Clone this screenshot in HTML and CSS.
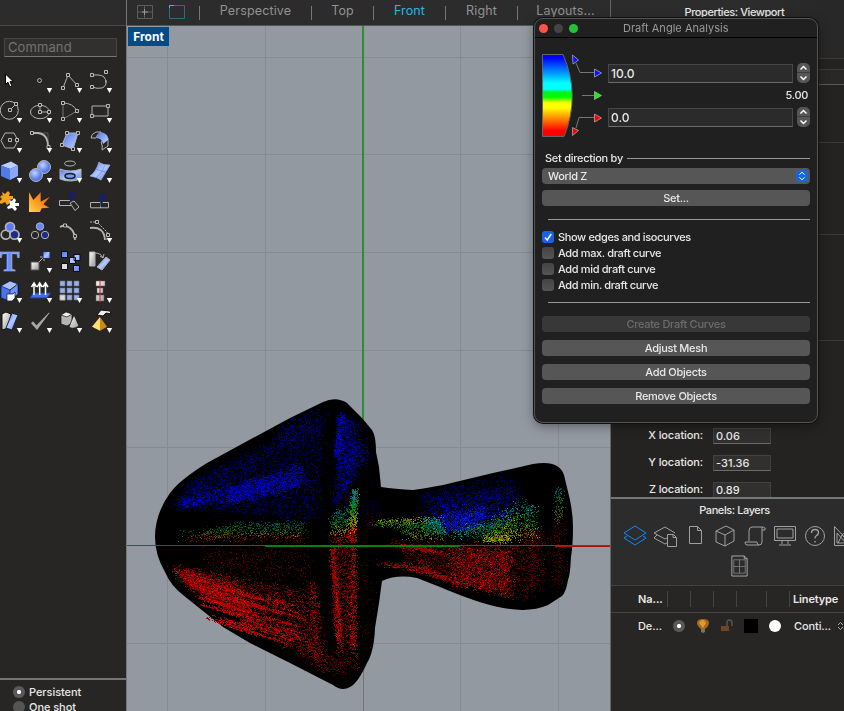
FILE: index.html
```html
<!DOCTYPE html>
<html lang="en">
<head>
<meta charset="utf-8">
<title>Draft Angle Analysis</title>
<link rel="stylesheet" href="styles.css">
</head>
<body>
<svg width="0" height="0" class="defs">
  <defs>
    <linearGradient id="blue" x1="0" y1="0" x2="1" y2="1"><stop offset="0" stop-color="#4a74ea"/><stop offset=".5" stop-color="#b4c8ff"/><stop offset="1" stop-color="#5a7ff0"/></linearGradient>
    <linearGradient id="sheet" x1="0" y1="0" x2="1" y2="1"><stop offset="0" stop-color="#4b74ee"/><stop offset="1" stop-color="#c4d4ff"/></linearGradient>
    <linearGradient id="grey" x1="0" y1="0" x2="1" y2="1"><stop offset="0" stop-color="#fff"/><stop offset="1" stop-color="#999"/></linearGradient>
    <radialGradient id="ball" cx=".4" cy=".35"><stop offset="0" stop-color="#c3d3ff"/><stop offset="1" stop-color="#587be8"/></radialGradient>
    <linearGradient id="fire" x1="0" y1="1" x2="1" y2="0"><stop offset="0" stop-color="#ffd84a"/><stop offset=".55" stop-color="#ff8a1c"/><stop offset="1" stop-color="#f04a10"/></linearGradient>
    <linearGradient id="angle" x1="0" y1="0" x2="0" y2="1"><stop offset=".04" stop-color="#00f"/><stop offset=".35" stop-color="#0ff"/><stop offset=".42" stop-color="#0ff"/><stop offset=".46" stop-color="#00f020"/><stop offset=".52" stop-color="#0f0"/><stop offset=".59" stop-color="#ff0"/><stop offset=".65" stop-color="#ff0"/><stop offset=".93" stop-color="#f00"/></linearGradient>
    <path id="more" d="M21.8 22h5.4l-2.7 5z" fill="#fff"/>
    <path id="node" d="M-1.5-1.5h3v3h-3z" fill="#272625" stroke="#bbb"/>
  </defs>
</svg>
<div class="app">
  <aside class="tools">
    <div class="tools-top"></div>
    <div class="command">Command</div>
    <div class="palette">
      <svg viewBox="0 0 30 30"><path d="M10.5 8v10.5l2.500-2.200 2 4.600 2-1-2-4.200h3.400z" fill="#fff" stroke="#000"/></svg>
      <svg viewBox="0 0 30 30"><circle cx="14.5" cy="14.5" r="2"/><use href="#more"/></svg>
      <svg viewBox="0 0 30 30"><path d="M8 22 13 9l9 10"/><use href="#node" x="8" y="22"/><use href="#node" x="13" y="9"/><use href="#node" x="22" y="19"/><use href="#more"/></svg>
      <svg viewBox="0 0 30 30"><path d="M7 9h6q8 0 8 8M7 21q5 2 10 1 5-2 4-8"/><use href="#node" x="7" y="9"/><use href="#node" x="21" y="6"/><use href="#node" x="7" y="21"/><use href="#more"/></svg>

      <svg viewBox="0 0 30 30"><circle cx="14.3" cy="14.3" r="9"/><path d="m15 14 6-6"/><use href="#node" x="15" y="14"/><use href="#node" x="21" y="8"/><use href="#more"/></svg>
      <svg viewBox="0 0 30 30"><ellipse cx="15" cy="16" rx="9.5" ry="6.7"/><path d="M15 9v7h9"/><use href="#node" x="15" y="9"/><use href="#node" x="15" y="16"/><use href="#node" x="24" y="16"/><use href="#more"/></svg>
      <svg viewBox="0 0 30 30"><path d="M8 7q10 0 14 8"/><path d="M8 7v16l14-8" opacity=".6"/><use href="#node" x="8" y="7"/><use href="#node" x="22" y="15"/><use href="#node" x="8" y="23"/><use href="#more"/></svg>
      <svg viewBox="0 0 30 30"><path d="M7 10h16v10H7z"/><use href="#node" x="23" y="10"/><use href="#node" x="7" y="20"/><use href="#more"/></svg>

      <svg viewBox="0 0 30 30"><path d="m6 14.500 4-7.500h9l4 7.500-4 7.500h-9z"/><use href="#node" x="15" y="14"/><use href="#node" x="22" y="14"/><use href="#more"/></svg>
      <svg viewBox="0 0 30 30"><path d="M7 7h16v14" opacity=".35"/><path d="M7 7h6q10 1 10 14" stroke-width="1.8"/><use href="#node" x="7" y="7"/><use href="#node" x="23.5" y="21"/><use href="#more"/></svg>
      <svg viewBox="0 0 30 30"><path d="M12 7h11l-5 16-11-4z" fill="url(#sheet)"/><use href="#node" x="12" y="7"/><use href="#node" x="23" y="7"/><use href="#node" x="18" y="23"/><use href="#node" x="7" y="19"/><use href="#more"/></svg>
      <svg viewBox="0 0 30 30"><path d="M6 12q0-4 5-6l5 0q-4 2-5 6zM16 16l7-4v8l-6 4q1-4-1-8z"/><path d="m11 12 5-6q8 2 7 8l-5 4q-1-6-7-6z" fill="url(#sheet)" stroke="none"/><use href="#more"/></svg>

      <svg viewBox="0 0 30 30"><g stroke="none"><path d="m6 9.500 10-4 7 4-8 3.500z" fill="#bccdff"/><path d="m6 9.500 9 3.500v11L6 20z" fill="#527ae9"/><path d="m15 13 8-3.500V20l-8 4z" fill="#89a6fa"/></g><use href="#more"/></svg>
      <svg viewBox="0 0 30 30"><circle cx="19" cy="11" r="6.500" fill="url(#ball)"/><circle cx="11" cy="19" r="6.500" fill="url(#ball)"/><use href="#more"/></svg>
      <svg viewBox="0 0 30 30"><ellipse cx="15" cy="7.500" rx="5.500" ry="2.500"/><path d="M5 13q10 4 21 0v10q-11 4-21 0z" fill="url(#blue)"/><ellipse cx="15" cy="20" rx="5" ry="2.500" fill="#7996e8" stroke="#171b2a" stroke-width="1.500"/><use href="#more"/></svg>
      <svg viewBox="0 0 30 30"><path d="M14 6q3 3 11 3-3 5-9 15-4-3-11-4 6-4 9-14z" fill="url(#blue)" stroke="#9fb2f1" stroke-width=".7"/><path d="M11 13q4 2 10 3M20 9q-3 8-9 13" stroke="#6f88d8" stroke-width=".7"/><use href="#more"/></svg>

      <svg viewBox="0 0 30 30"><path d="m7 6 3 2 3-3 2 2-1 3 4 0v3l-4 1 1 3-3 2-2-3-4 2-2-2 3-3-2-2 2-2 1 1z" fill="#f6a21d" stroke="none"/><path d="m14 14 3 1 2-3 2 2-1 3 4 0v3l-4 0 2 3-2 2-3-3-4 1-1-2 3-2z" fill="#fff" stroke="none"/></svg>
      <svg viewBox="0 0 30 30"><path d="M4 26V6l4.300 8 7.400-7.700v9.400l9.300-5-6.700 7.600 6 3.400-7.600.6L15 26z" fill="url(#fire)" stroke="none"/></svg>
      <svg viewBox="0 0 30 30"><path d="M15 14.500H4.500v5H16M15 17l4-2 5 6-4 3.500z"/><path d="M14.300 6.300H21L15 17z" fill="#14206e" stroke="none"/></svg>
      <svg viewBox="0 0 30 30"><path d="M5.500 16.500h18v5.300h-18zM15.500 16v6"/><path d="M15.300 8.300h6.400l-6.400 13z" fill="#14206e" stroke="none"/></svg>

      <svg viewBox="0 0 30 30"><g stroke-width="1.700"><circle cx="10.700" cy="18.700" r="4.500"/><circle cx="19.500" cy="18.700" r="4.500" fill="#1b2c87"/><circle cx="15" cy="11" r="4.500" fill="#5a78ff"/></g><use href="#more"/></svg>
      <svg viewBox="0 0 30 30"><circle cx="15" cy="10.500" r="3.700" fill="#6685ff"/><circle cx="10" cy="19" r="3.700"/><circle cx="20" cy="19" r="3.700" fill="#1b2c87"/></svg>
      <svg viewBox="0 0 30 30"><path d="M5 11q5-3 10 1 5 4 5 12" stroke-width="1.800"/><use href="#node" x="10" y="9.500"/><use href="#node" x="20" y="20"/></svg>
      <svg viewBox="0 0 30 30"><path d="M5 12q14-2 15 12" stroke-width="1.800"/><path d="M5 6h7l10 10v8" stroke-dasharray="2 1"/><use href="#node" x="12" y="6"/><use href="#node" x="23" y="19"/><use href="#more"/></svg>

      <svg viewBox="0 0 30 30"><text x="14.500" y="25" text-anchor="middle" class="tee">T</text></svg>
      <svg viewBox="0 0 30 30"><path d="m13 17 6-6m-4 0h4v4"/><path d="M6 16h8v8H6z" fill="url(#grey)" stroke="#555"/><path d="M18 5.500h7v7h-7z" fill="url(#blue)" stroke="#222c55"/><use href="#more"/></svg>
      <svg viewBox="0 0 30 30"><g fill="url(#blue)" stroke="#080c1c"><path d="M6.500 5.500h6v6h-6zM19 8.500h6v6h-6zM14.500 11.500h6v6h-6zM18.500 19.500h6v6h-6z"/><path d="M6.500 17.500h6v6h-6z" fill="#ddd"/></g></svg>
      <svg viewBox="0 0 30 30"><path d="M4.500 6h5.500v14H4.500z" fill="url(#grey)"/><path d="m12 21 9-10 4 3-8 10z" fill="url(#blue)"/><path d="M10 7q6 0 8 5m1-4-1 4-3-2"/></svg>

      <svg viewBox="0 0 30 30"><g stroke="#0c1840" stroke-width=".7"><path d="m6 10 9-5 8 3v10l-8 7-9-3z" fill="#4773e5"/><path d="m6 10 9-5 8 3-8 6z" fill="#aac0ff"/><path d="m15 14 8-6v10l-8 7z" fill="#6f93f4"/><path d="M12 18h6l2-2v6l-3 3h-5z" fill="#fff"/></g><use href="#more"/></svg>
      <svg viewBox="0 0 30 30"><path d="m8 17-3 5h17l4-5z" fill="#426de5" stroke="#213b91"/><path d="M9 19V8m-2.500 3L9 7l2.500 4M14.700 19V8m-2.500 3 2.500-4 2.500 4M20.500 19V8M18 11l2.500-4 2.500 4" stroke="#fff" stroke-width="1.500"/><use href="#more"/></svg>
      <svg viewBox="0 0 30 30"><path d="M5 5h5v5H5zM12 5h5v5h-5zM19 5h5v5h-5zM5 12h5v5H5zM12 12h5v5h-5zM19 12h5v5h-5zM12 19h5v5h-5zM19 19h5v5h-5z" fill="#9aaee8" stroke="#666e88" stroke-width=".6"/><path d="M5 19h5v5H5z" fill="#ddd"/><use href="#more"/></svg>
      <svg viewBox="0 0 30 30"><path d="M11 5h9v5h-9zM12 12h6v5h-6zM11 19h8v6h-8z" fill="url(#grey)" stroke="#666" stroke-width=".5"/><path d="M15 4v22" stroke="#e02020"/><use href="#more"/></svg>

      <svg viewBox="0 0 30 30"><path d="m7 8 4-2 5 2-3 14-6 2z" fill="url(#grey)" stroke="#111"/><path d="m17 7 6 2-6 15-6-2z" fill="url(#blue)" stroke="#172446"/><use href="#more"/></svg>
      <svg viewBox="0 0 30 30"><path d="m6 17.300 2-2 3.500 4L24 6.500l.5.500L12 24z" fill="#a7a6a4" stroke="none"/><use href="#more"/></svg>
      <svg viewBox="0 0 30 30"><g stroke="#111" stroke-width=".7"><path d="m6 9 5-3 6 2v9l-5 3-6-2z" fill="#b5b5b5"/><path d="m6 9 5-3 6 2-5 3z" fill="#eee"/><path d="m19 9-5 12q4 3 10-1z" fill="url(#grey)"/></g><use href="#more"/></svg>
      <svg viewBox="0 0 30 30"><path d="m15 11-8 9.700 8 4z" fill="#ffe072" stroke="none"/><path d="m15 11 7 9.700-7 4z" fill="#c98a18" stroke="none"/><path d="m12 9 4-5 9 1 1 3-5-1-3 3z" fill="#eee" stroke="#111"/><use href="#more"/></svg>
    </div>
    <div class="modes">
      <div class="mode"><i class="radio on"></i>Persistent</div>
      <div class="mode"><i class="radio"></i>One shot</div>
    </div>
  </aside>

  <main class="view">
    <nav class="tabs">
      <svg class="lay" viewBox="0 0 16 14"><path d="M.5.500h15v13H.5zM7.500.500v13M.5 7h15"/><path d="M7.500 4v6M5 7h6" stroke="#999"/></svg>
      <svg class="single" viewBox="0 0 16 14"><path d="M.5.500h15v13H.5z" stroke="#2d6b82"/><path d="M.5 3V.500H5" stroke="#35bfee"/></svg>
      <i></i><span class="t1">Perspective</span><i></i><span class="t2">Top</span><i></i><span class="t3 active">Front</span><i></i><span class="t4">Right</span><i></i><span class="t5">Layouts...</span>
    </nav>
    <div class="viewport">
      <svg class="scene" viewBox="127 26 484 685">
        <path d="M167.500 26v685M265.500 26v685M460.500 26v685M558.500 26v685M127 57.500h484M127 154.500h484M127 252.500h484M127 350.500h484M127 447.500h484M127 643.500h484" stroke="#858b93"/>
        <path d="M363.500 545v166" stroke="#6f747a"/>
        <path d="M363 26v519" stroke="#2e8d35" stroke-width="2"/>
        <path d="M155 537Q155 514 170 493C180 480 196 470 207 463L240 445 290 418 323 402Q336 396 347 403L362 418 372 430Q376 436 376 452L379 467 381 487Q395 489 413 490 422 489 443 485L493 473 533 464Q549 461 557 466 562 469 564 475L570 500Q573 515 573 527 573 545 571 557 570 576 568 580 566 592 562 596L548 605Q530 613 503 608 480 604 440 587L417 578Q397 574 382 581L379 603 375 628Q374 652 367 663 358 683 350 687 342 692 333 685L290 663 250 643 223 627 183 595Q171 586 165 572 155 555 155 537Z" fill="#000"/>
      </svg>
      <canvas id="mesh" width="484" height="685"></canvas>
      <svg class="scene" viewBox="127 26 484 685">
        <path d="M127 545.500h484" stroke="#0b7511"/>
        <path d="M265 546h195" stroke="#078407" stroke-width="2"/>
        <path d="M555 546.500h56" stroke="#a51208"/>
      </svg>
      <div class="view-name">Front</div>
    </div>
  </main>

  <aside class="side">
    <section class="props">
      <h2>Properties: Viewport</h2>
      <div class="r r1"></div><div class="r r2"></div><div class="r r3"></div><div class="r r4"></div><div class="r r5"></div>
      <div class="locs">
        <label>X location:</label><b>0.06</b>
        <label>Y location:</label><b>-31.36</b>
        <label>Z location:</label><b>0.89</b>
      </div>
    </section>
    <section class="layers">
      <h2>Panels: Layers</h2>
      <div class="icons">
        <svg viewBox="0 0 24 22" class="cur"><path d="M1 8 12 1l11 7-11 7zM4 11l-3 2 11 7 11-7-3-2"/></svg>
        <svg viewBox="0 0 24 22"><path d="M14 13 12 14 1 8l11-6 10 6M4 10l-3 3 11 6 2-1M14.500 9.500h6l3 3v9h-9zM20 9.500v3h3"/></svg>
        <svg viewBox="0 0 24 22"><path d="M6.500 1.500h8l4 4V18.500H6.500zM14.500 1.500v4h4"/></svg>
        <svg viewBox="0 0 24 22"><path d="m3 6 10-5 8 4v11l-9 5-9-4zM3 6l9 4 9-5M12 10v11"/></svg>
        <svg viewBox="0 0 24 22"><path d="M22 5V3q-1-1-3-1H9q-3 0-3 4v10M19 2v15q0 3-3 3H4q-2 0-2-3h12q0 3 2 3M19 5h3"/></svg>
        <svg viewBox="0 0 24 22"><path d="M1.500 1.500h21v14h-21zM4 4h16v9H4zM9 16v3m6-3v3M6 20h12"/></svg>
        <svg viewBox="0 0 24 22"><circle cx="12" cy="11" r="9.500"/><path d="M8.500 8q0-3.500 3.500-3.500t3.500 3q0 2-2 3-1.500.8-1.500 3M12 16v1.500" stroke-width="1.400"/></svg>
        <svg viewBox="0 0 24 22"><path d="M1.500 1.500v19h18M1.500 1.500l18 19M4 8v10h9zM20 1 9 10l-4 8M9 10l3 3"/></svg>
      </div>
      <svg class="sheet" viewBox="0 0 18 23"><path d="M1 1h13l3 3v18H1zM14 1v3h3"/><path d="M3 5h12v14H3zM9 5v14M3 12h12" stroke="#777"/></svg>
      <div class="row head"><span class="n">Na...</span><i></i><i></i><i></i><i class="w"></i><i></i><i class="end"></i><span class="lt">Linetype</span></div>
      <div class="row item"><span class="n">De...</span><i class="radio on"></i>
        <svg width="14" height="16" viewBox="0 0 14 16"><path d="M1 5q0-4 6-4t6 4q0 3-4 6H5Q1 8 1 5z" fill="#a66a1c"/><path d="M3 5q1-3 4-3 2 0 3 3l-3 5z" fill="#d99a3a"/><path d="M5 11h4v3l-2 1-2-1z" fill="#77736b"/></svg>
        <svg width="13" height="14" viewBox="0 0 13 14"><path d="M1 7h8v5H1z" fill="#75451f"/><path d="M7 7V4q0-3 2.500-3T12 4v3" fill="none" stroke="#57544f" stroke-width="1.500"/></svg>
        <i class="sw"></i><i class="dot"></i><span class="lt2">Conti...</span>
        <svg class="ud" width="7" height="8" viewBox="0 0 7 8"><path d="m1 3 2.500-2.500L6 3M1 5l2.500 2.500L6 5" fill="none" stroke="#aaa"/></svg>
      </div>
    </section>
  </aside>
</div>

<div class="dialog">
  <header><i class="red"></i><i></i><i class="green"></i><span>Draft Angle Analysis</span></header>
  <div class="body">
    <div class="range">
      <svg width="62" height="84" viewBox="0 0 62 84">
        <path d="M.5.500H21Q39 41 22 82.500H.5z" fill="url(#angle)" stroke="#666"/>
        <g fill="none" stroke="#777"><path d="m34 9 4 9.500h14M40 41.500h12M34 74l3-10.500h15"/></g>
        <g stroke="#aaa" stroke-width=".8"><path d="m30.500 1 6 5-5.500 4zM52.500 15l7 4-7 4z" fill="#11f"/><path d="m52.500 37.500 7 4-7 4z" fill="#0f0"/><path d="m52.500 60 7 4-7 4zM30.500 73.500l6 3-6 5z" fill="#f00"/></g>
      </svg>
      <div class="fields">
        <div class="field"><b>10.0</b><em><svg viewBox="0 0 13 20"><path d="m3.500 6.500 3-3 3 3M3.500 13.500l3 3 3-3"/></svg></em></div>
        <div class="mid">5.00</div>
        <div class="field"><b>0.0</b><em><svg viewBox="0 0 13 20"><path d="m3.500 6.500 3-3 3 3M3.500 13.500l3 3 3-3"/></svg></em></div>
      </div>
    </div>
    <div class="legend">Set direction by</div>
    <div class="btn select">World Z<em><svg viewBox="0 0 12 12"><path d="m3.500 4.700 2.500-2.500 2.500 2.500M3.500 7.300 6 9.800l2.500-2.500"/></svg></em></div>
    <div class="btn set">Set...</div>
    <hr>
    <div class="check"><i class="on"><svg viewBox="0 0 12 12"><path d="m3 6.500 2.200 2.500L9.200 3"/></svg></i>Show edges and isocurves</div>
    <div class="check"><i></i>Add max. draft curve</div>
    <div class="check"><i></i>Add mid draft curve</div>
    <div class="check"><i></i>Add min. draft curve</div>
    <hr class="second">
    <div class="actions"><div class="btn off">Create Draft Curves</div><div class="btn">Adjust Mesh</div><div class="btn">Add Objects</div><div class="btn">Remove Objects</div></div>
  </div>
</div>
<script src="mesh.js"></script>
</body>
</html>
```
FILE: styles.css
```css
* { box-sizing: border-box; }
body { margin: 0; width: 844px; height: 711px; overflow: hidden; background: #252423; color: #e8e8e8; font: 11px/14px Inter, "Liberation Sans", sans-serif; }
.defs { position: absolute; }
svg { display: block; }
.app { display: flex; height: 711px; }
h2 { margin: 0; font-size: 11px; line-height: 14px; font-weight: 500; text-align: center; letter-spacing: -.42px; }

.tools { width: 127px; border-right: 1px solid #777; background: #272625; display: flex; flex-direction: column; overflow: hidden; flex: none; }
.tools-top { height: 26px; flex: none; background: #2c2c2c; border-bottom: 1px solid #484848; }
.command { width: 113px; height: 19px; margin: 12px 0 9px 4px; padding-left: 3px; flex: none; background: #31302f; border: 1px solid #444; border-bottom-color: #777; color: #737271; font-size: 13px; line-height: 17px; letter-spacing: .1px; }
.palette { display: grid; grid-template-columns: repeat(4, 30px); grid-auto-rows: 30px; margin-left: -5px; }
.palette svg { width: 30px; height: 30px; fill: none; stroke: #b2b2b2; stroke-width: 1; }
.palette use[href="#more"] { stroke: none; }
.tee { font: bold 30px "Liberation Serif", serif; fill: #6d92f5; stroke: #a6bbff; stroke-width: .7px; }
.modes { margin-top: auto; height: 33px; border-top: 2px solid #757575; padding: 4px 0 0 13px; flex: none; }
.mode { display: flex; align-items: center; gap: 4px; height: 15px; font-weight: 500; letter-spacing: -.05px; }
.radio { width: 12px; height: 12px; border-radius: 50%; background: #555; display: block; flex: none; }
.radio.on { background: radial-gradient(circle, #fff 0 1.700px, #595959 2.500px); }

.view { width: 484px; flex: none; display: flex; flex-direction: column; border-right: 1px solid #666; }
.tabs { height: 26px; background: #2c2c2c; border-bottom: 1px solid #555; display: flex; align-items: flex-start; color: #929292; font-size: 12.500px; line-height: 15px; padding-top: 3px; }
.tabs svg { width: 16px; height: 14px; fill: none; stroke: #5c5c5c; margin: 2px 0 0 10px; flex: none; }
.tabs svg.single { margin-left: 16px; margin-right: 14px; }
.tabs i { width: 1px; height: 14px; background: #777; margin-top: 3px; flex: none; }
.tabs span { text-align: center; white-space: nowrap; letter-spacing: .15px; flex: none; }
.t1 { width: 111px; } .t2 { width: 61px; } .t3 { width: 71px; } .t4 { width: 71px; } .t5 { width: 95px; }
.tabs .active { color: #2bb5e6; }
.viewport { position: relative; flex: 1; background: #9299a1; overflow: hidden; }
.scene, #mesh { position: absolute; left: 0; top: 0; width: 484px; height: 685px; fill: none; }
.view-name { position: absolute; left: 1px; top: 1px; width: 41px; height: 19px; background: #024b8b; color: #fff; font-size: 12px; font-weight: 700; line-height: 19px; text-align: center; }

.side { flex: 1; min-width: 0; display: flex; flex-direction: column; overflow: hidden; }
.props { height: 497px; background: #242322; overflow: hidden; flex: none; }
.props h2 { height: 58px; padding: 5px 0 0 14px; background: linear-gradient(90deg, #2c2c2c 60%, #272727); }
.r { border-top: 1px solid #3b3a39; }
.r1 { height: 11px; } .r2 { height: 15px; background: #292827; } .r3 { height: 58px; border-color: #5a5958; } .r4 { height: 92px; } .r5 { height: 107px; border-bottom: 1px solid #3b3a39; }
.locs { display: grid; grid-template-columns: 92px 58px; grid-auto-rows: 27px; column-gap: 10px; padding-top: 87px; font-weight: 500; }
.locs label { text-align: right; line-height: 15px; letter-spacing: -.1px; }
.locs b { height: 16px; line-height: 15px; padding-left: 2px; background: #31302f; border: 1px solid #434241; border-bottom-color: #6b6b6b; font-weight: 500; }
.layers { flex: 1; border-top: 2px solid #777; background: #272625; }
.layers h2 { background: #2c2c2c; height: 26px; padding: 4px 0 0 14px; }
.icons { display: flex; background: #2c2c2c; padding-left: 12px; gap: 6px; height: 28px; overflow: hidden; }
.icons svg { width: 24px; height: 22px; fill: none; stroke: #a0a0a0; flex: none; }
.icons .cur { stroke: #1485ff; }
.sheet { width: 233px; height: 33px; padding: 2px 0 8px 24px; background: #2c2c2c; border-bottom: 1px solid #414141; fill: none; stroke: #aaa; }
.row { display: flex; align-items: center; height: 27px; font-weight: 500; white-space: nowrap; overflow: hidden; }
.row .n { width: 56px; padding-left: 27px; flex: none; letter-spacing: -.1px; }
.head { font-weight: 600; border-bottom: 1px solid #454443; }
.head i { width: 1px; height: 16px; background: #454443; margin-right: 22px; flex: none; }
.head i.w { margin-right: 29px; } .head i.end { margin-right: 3px; }
.head .lt { letter-spacing: -.15px; }
.row.item { height: 26px; }
.item .radio { margin: 0 11px 0 6px; }
.item svg { flex: none; margin-right: 10px; }
.sw { width: 14px; height: 14px; background: #000; margin: 0 11px 0 1px; flex: none; }
.dot { width: 12px; height: 12px; border-radius: 50%; background: #fff; flex: none; }
.lt2 { margin-left: 13px; width: 43px; flex: none; letter-spacing: -.1px; }
.item .ud { margin: 0; }

.dialog { position: absolute; left: 534px; top: 18px; width: 284px; height: 405px; background: #202020; border: 1px solid #555; border-radius: 9px; box-shadow: 0 0 0 1px #111, 0 3px 12px #0006; overflow: hidden; }
.dialog header { height: 19px; border-bottom: 1px solid #000; display: flex; align-items: center; padding-left: 4px; gap: 6px; color: #999; }
.dialog header i { width: 9px; height: 9px; border-radius: 50%; background: #444; }
.dialog header i.red { background: #ff5249; } .dialog header i.green { background: #22c13a; }
.dialog header span { margin-left: 39px; letter-spacing: .02px; }
.body { padding: 16px 7px 0; }
.range { display: flex; height: 84px; }
.fields { flex: 1; padding: 9px 0 0 4px; }
.field { display: flex; height: 20px; align-items: center; gap: 4px; }
.field b { flex: 1; height: 19px; border: 1px solid #464646; border-bottom-color: #6b6b6b; background: #2b2b2b; font-size: 12px; line-height: 18px; font-weight: 500; padding-left: 2px; }
.field em { width: 13px; height: 20px; border-radius: 5px; background: linear-gradient(#565656 9.500px, #3c3c3c 9.500px 10.500px, #565656 10.500px); }
.field svg { fill: none; stroke: #fff; stroke-width: 1.500; }
.mid { height: 24px; line-height: 24px; text-align: right; padding-right: 2px; font-weight: 500; letter-spacing: -.3px; }
.legend { display: flex; align-items: center; gap: 4px; margin-top: 13px; padding-left: 3px; font-weight: 500; height: 14px; letter-spacing: -.27px; }
.legend::after { content: ""; flex: 1; height: 1px; background: #999; }
.btn { height: 16px; border-radius: 4px; background: #565656; text-align: center; line-height: 16px; font-weight: 500; letter-spacing: -.28px; }
.select { margin-top: 3px; text-align: left; padding: 0 2px 0 6px; display: flex; justify-content: space-between; align-items: center; }
.select em { width: 12px; height: 12px; border-radius: 3px; background: #1768d5; }
.select svg { fill: none; stroke: #fff; }
.set { margin-top: 6px; }
hr { border: 0; height: 1px; background: #999; margin: 13px 0 9px 6px; }
.check { display: flex; align-items: center; height: 16px; gap: 4px; font-weight: 500; letter-spacing: -.36px; }
.check i { width: 12px; height: 12px; border-radius: 3px; background: linear-gradient(#444, #555); }
.check i.on { background: #1762e6; }
.check svg { fill: none; stroke: #fff; stroke-width: 1.500; }
hr.second { margin: 9px 0 13px 6px; }
.actions { display: grid; gap: 8px; }
.btn.off { background: #383838; color: #6c6c6c; }
```
FILE: mesh.js
```js
// Speckled draft-angle shading: points scattered over quads [x1,y1 .. x4,y4].
const ctx = document.getElementById('mesh').getContext('2d');
let seed = 4711;
const rnd = () => (seed = (seed * 16807) % 2147483647) / 2147483647;
const B = [0, 0, 255], C = [0, 190, 180], G = [10, 205, 30], Y = [195, 200, 0], R = [245, 0, 0];
function scatter(q, count, colors, lo, hi, jitter = 9) {
  for (let i = 0; i < count; i++) {
    const u = rnd(), v = rnd();
    const x = (q[0] * (1 - u) + q[2] * u) * (1 - v) + (q[6] * (1 - u) + q[4] * u) * v + (rnd() + rnd() - 1) * jitter;
    const y = (q[1] * (1 - u) + q[3] * u) * (1 - v) + (q[7] * (1 - u) + q[5] * u) * v + (rnd() + rnd() - 1) * jitter * .7;
    const c = colors[Math.min(colors.length - 1, Math.floor(Math.max(0, v + (rnd() - .5) * .2) * colors.length))];
    const k = lo + (hi - lo) * rnd() * rnd();
    ctx.fillStyle = `rgb(${c.map(n => Math.round(n * k)).join()})`;
    ctx.fillRect(Math.floor(x) - 127, Math.floor(y) - 26, 1, 1);
  }
}
// head, upper side
scatter([190, 485, 325, 414, 318, 520, 175, 506], 5200, [B], .15, .75);
scatter([285, 424, 325, 408, 318, 435, 275, 445], 300, [B], .3, .8);
scatter([182, 500, 300, 468, 302, 490, 180, 506], 700, [B], .5, 1);
scatter([228, 490, 300, 466, 302, 486, 230, 502], 1300, [B], .5, 1.1);
scatter([340, 414, 355, 424, 356, 475, 334, 508], 1700, [B], .25, .9, 5);
scatter([340, 412, 345, 416, 338, 460, 334, 455], 250, [B], .6, 1, 3);
scatter([358, 437, 365, 442, 363, 465, 358, 465], 150, [B], .4, .9);
// transition bands
scatter([235, 524, 305, 522, 305, 541, 180, 540], 850, [C, G, Y, R], .25, .7, 6);
scatter([178, 530, 238, 527, 238, 541, 178, 540], 100, [G, Y], .2, .6, 6);
scatter([353, 490, 357, 490, 356, 542, 347, 542], 560, [C, G, Y, R], .5, 1, 3);
scatter([332, 514, 348, 507, 348, 543, 332, 543], 350, [C, G, Y, R], .3, .9, 5);
// head, lower side
scatter([172, 567, 306, 592, 322, 666, 200, 593], 4800, [R], .2, .85);
scatter([174, 569, 240, 585, 265, 632, 195, 587], 1300, [R], .5, 1.1, 7);
scatter([205, 550, 308, 547, 308, 585, 210, 572], 600, [R], .15, .6);
scatter([332, 547, 356, 547, 355, 650, 335, 630], 1500, [R], .2, .8, 5);
scatter([331, 547, 334, 547, 343, 655, 337, 640], 600, [R], .5, 1.1, 3);
scatter([352, 547, 355, 547, 356, 660, 350, 650], 350, [R], .5, 1.1, 4);
scatter([309, 582, 315, 582, 328, 675, 310, 650], 450, [R], .3, .9, 5);
scatter([312, 660, 350, 640, 357, 668, 332, 676], 280, [R], .2, .7);
for (let i = 0; i < 60; i++) {
  const x = 195 + rnd() * 85, y = 575 + (x - 195) * .3 + rnd() * 42;
  scatter([x, y, x + 32, y + 10, x + 32, y + 10, x, y], 34, [R], .6, 1.1, 1.4);
}
// handle, upper side
scatter([422, 494, 512, 475, 520, 500, 422, 503], 800, [B], .15, .7);
scatter([432, 502, 516, 487, 513, 525, 428, 523], 1800, [B], .25, .95);
scatter([442, 516, 488, 507, 478, 527, 447, 531], 850, [[0, 30, 255]], .5, 1.1, 6);
scatter([424, 518, 440, 518, 446, 535, 427, 531], 420, [C, [0, 170, 130]], .4, 1.1, 6);
scatter([378, 521, 425, 518, 428, 528, 374, 525], 330, [Y, G], .35, 1, 5);
scatter([397, 527, 430, 526, 445, 540, 407, 537], 240, [G, Y], .3, .8);
scatter([445, 534, 480, 526, 518, 516, 508, 542], 600, [C, G, Y], .3, 1);
scatter([487, 526, 518, 500, 524, 538, 487, 542], 550, [C, G, Y], .3, 1);
scatter([487, 536, 510, 536, 510, 541, 484, 541], 170, [Y], .5, 1.1, 5);
scatter([524, 503, 534, 505, 536, 538, 526, 538], 260, [C, G, Y], .3, 1);
scatter([558, 488, 561, 488, 560, 520, 556, 525], 140, [C, G, Y], .3, .7, 6);
// handle, lower side
scatter([388, 542, 525, 547, 515, 598, 432, 573], 2500, [R], .15, .7);
scatter([450, 550, 513, 550, 508, 595, 457, 582], 2100, [R], .3, 1.1);
scatter([395, 546, 420, 546, 445, 554, 425, 550], 250, [R], .5, 1, 4);
scatter([374, 563, 425, 565, 470, 590, 425, 569], 450, [R], .4, 1.1, 5);
scatter([526, 532, 545, 532, 540, 590, 517, 598], 550, [R], .2, .65);
scatter([556, 522, 561, 522, 562, 583, 552, 588], 220, [R], .2, .6);
// stray points around the neck
scatter([362, 560, 376, 560, 372, 640, 362, 650], 60, [R], .2, .6);
scatter([364, 500, 378, 500, 380, 530, 364, 530], 80, [B, R], .2, .5);
```
